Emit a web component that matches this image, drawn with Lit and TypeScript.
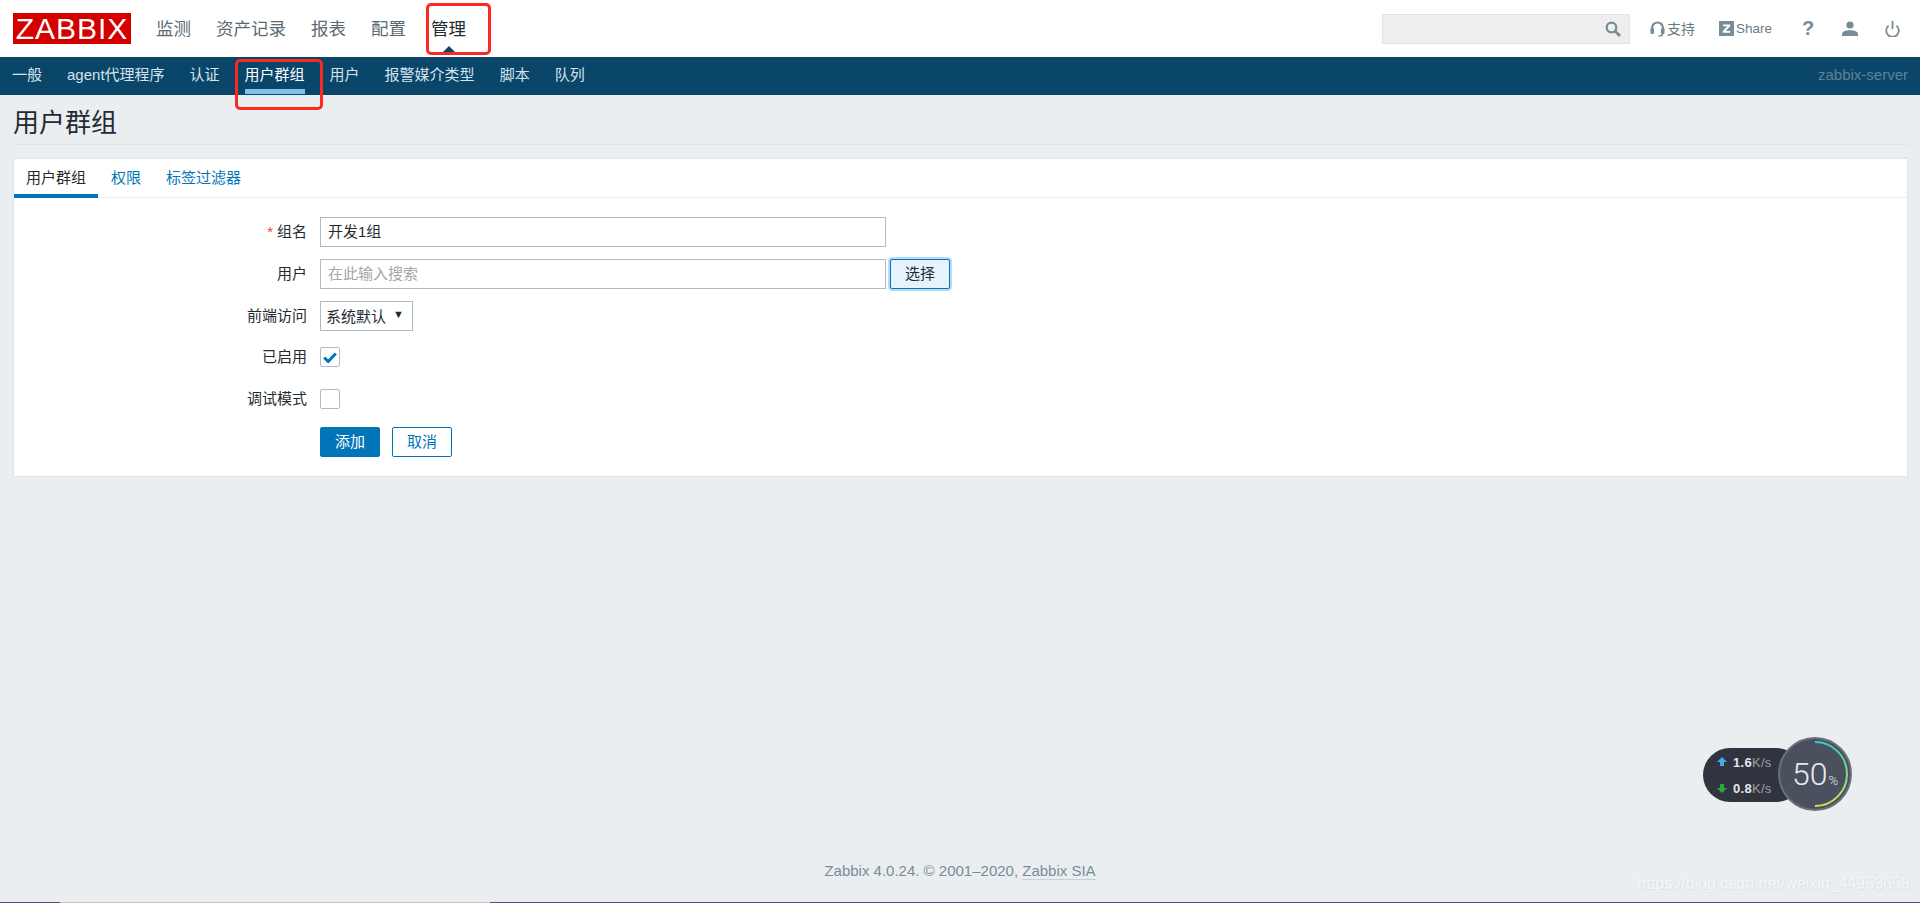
import { LitElement, html, css, svg } from "lit";
import { customElement } from "lit/decorators.js";

@customElement("app-root")
export class AppRoot extends LitElement {
  static styles = css`
    :host {
      display: flex;
      flex-direction: column;
      position: relative;
      height: 903px;
      overflow: hidden;
      background: #ebeef0;
      font-family: "Liberation Sans", "Noto Sans CJK SC", sans-serif;
      color: #1f2c33;
    }
    a { text-decoration: none; color: inherit; }
    .top {
      height: 57px;
      flex: none;
      background: #fff;
      display: flex;
      align-items: center;
      position: relative;
    }
    .logo {
      width: 118px;
      height: 31px;
      margin-left: 13px;
      background: #d40000;
      color: #fff;
      font-size: 30px;
      line-height: 31px;
      text-align: center;
      letter-spacing: 1px;
      flex: none;
    }
    .mainnav { display: flex; gap: 25px; margin: 0 0 2px 25px; font-size: 17.5px; color: #5c6b73; }
    .mainnav .on { color: #1f2c33; position: relative; }
    .mainnav .on::after {
      content: "";
      position: absolute;
      left: 50%;
      margin-left: -9px;
      top: 31px;
      border: 9px solid transparent;
      border-top: 0;
      border-bottom: 9px solid #0a466a;
    }
    .tools { margin-left: auto; display: flex; align-items: center; padding-right: 20px; font-size: 13.5px; color: #6a7a82; }
    .search {
      width: 238px;
      height: 28px;
      background: #eeeeee;
      border: 1px solid #e4e4e4;
      display: flex;
      align-items: center;
      justify-content: flex-end;
      padding-right: 8px;
      box-sizing: content-box;
      margin-right: 20px;
    }
    .tool { display: flex; align-items: center; gap: 2px; }
    .support { width: 45px; margin-right: 24px; }
    .support span { font-size: 14px; margin-bottom: 2px; }
    .share { width: 53px; margin-right: 30px; }
    .help { width: 10px; margin-right: 30px; color: #768d99; font-size: 20px; font-weight: 700; }
    .user { width: 16px; margin-right: 27px; }
    .power { width: 15px; }
    .sub {
      height: 38px;
      flex: none;
      background: #0a466a;
      display: flex;
      align-items: stretch;
      padding: 0 12px;
      font-size: 15px;
      color: #d5e4ec;
    }
    .subnav { display: flex; gap: 25px; }
    .subnav a { display: block; line-height: 36px; height: 32px; }
    .subnav a.on { color: #fff; border-bottom: 5px solid #7fc1ee; }
    .server { margin-left: auto; line-height: 36px; color: #5e8299; }
    main { flex: 1; padding: 0 12px 0 13px; display: flex; flex-direction: column; min-height: 0; }
    h1 {
      margin: 0;
      font-weight: 400;
      font-size: 26px;
      height: 50px;
      line-height: 56px;
      border-bottom: 1px solid #dfe4e7;
      box-sizing: border-box;
    }
    .card {
      margin-top: 13px;
      background: #fff;
      border: 1px solid #dfe4e7;
      height: 319px;
      box-sizing: border-box;
    }
    .tabs { display: flex; gap: 1px; height: 39px; border-bottom: 1px solid #ebeef0; font-size: 15px; color: #0275b8; box-sizing: border-box; }
    .tabs a { display: block; padding: 0 12px; line-height: 37px; height: 39px; box-sizing: border-box; }
    .tabs a.on { color: #1f2c33; border-bottom: 4px solid #0275b8; }
    form {
      display: grid;
      grid-template-columns: 293px 1fr;
      column-gap: 13px;
      grid-auto-rows: 30px;
      row-gap: 12px;
      padding-top: 19px;
      font-size: 15px;
      align-items: center;
    }
    label { text-align: right; color: #1f2c33; margin-bottom: 3px; }
    label.lift { margin-bottom: 6px; }
    label i { color: #e8453c; font-style: normal; margin-right: 4px; }
    .ctl { display: flex; align-items: center; gap: 4px; }
    .inp {
      width: 566px;
      height: 30px;
      box-sizing: border-box;
      border: 1px solid #acbbc4;
      padding-left: 7px;
      line-height: 27px;
      color: #1f2c33;
    }
    .inp.ph { color: #a5a5a5; }
    .pick {
      width: 60px;
      height: 30px;
      box-sizing: border-box;
      border: 1px solid #0275b8;
      border-radius: 2px;
      background: #e6f3fc;
      box-shadow: 0 0 0 2px #b9dcf5;
      text-align: center;
      line-height: 28px;
      color: #1f2c33;
    }
    .sel {
      width: 93px;
      height: 30px;
      box-sizing: border-box;
      border: 1px solid #acbbc4;
      padding-left: 5px;
      line-height: 29px;
      display: flex;
      justify-content: space-between;
    }
    .sel span:last-child { font-size: 11px; margin-right: 8px; line-height: 25px; }
    .chk {
      width: 20px;
      height: 20px;
      margin-top: -2px;
      box-sizing: border-box;
      border: 1px solid #acbbc4;
      border-radius: 2px;
      display: flex;
      align-items: center;
      justify-content: center;
    }
    .btns { display: flex; gap: 12px; grid-column: 2; }
    .btn {
      width: 60px;
      height: 30px;
      box-sizing: border-box;
      border: 1px solid #0275b8;
      border-radius: 2px;
      text-align: center;
      line-height: 28px;
      color: #0275b8;
    }
    .btn.primary { background: #0275b8; color: #fff; }
    footer {
      flex: none;
      height: 40px;
      text-align: center;
      font-size: 15px;
      color: #768d99;
      line-height: 18px;
    }
    footer a { border-bottom: 1px solid #c6d0d6; }
    .strip { flex: none; height: 1px; display: flex; }
    .strip b { background: #5c4a84; }
    .strip b:nth-child(1) { width: 60px; }
    .strip b:nth-child(2) { width: 430px; background: #c4c4c4; }
    .strip b:nth-child(3) { flex: 1; }
    .mark {
      position: absolute;
      border: 3px solid #fa2a1e;
      border-radius: 5px;
      box-sizing: border-box;
      pointer-events: none;
    }
    .m1 { left: 426px; top: 3px; width: 65px; height: 52px; }
    .m2 { left: 235px; top: 59px; width: 88px; height: 51px; }
    .water {
      position: absolute;
      right: 10px;
      bottom: 10px;
      font-size: 16px;
      color: #f4f6f7;
      text-shadow: 1px 1px 1px #dadee1;
    }
    .widget { position: absolute; left: 1703px; top: 737px; width: 150px; height: 76px; }
    .pill {
      position: absolute;
      left: 0;
      top: 11px;
      width: 100px;
      height: 54px;
      border-radius: 27px;
      background: #2f343e;
      font-size: 13px;
      color: #e5e8ee;
    }
    .rate { position: absolute; left: 30px; font-weight: 700; letter-spacing: 0.3px; }
    .rate small { font-size: 13px; font-weight: 400; color: #9aa0aa; }
    .arrow { position: absolute; left: 14px; }
    .dial { position: absolute; left: 75px; top: 0; }
    .pct {
      position: absolute;
      left: 75px;
      top: 0;
      width: 74px;
      height: 74px;
      display: flex;
      align-items: baseline;
      justify-content: center;
      line-height: 74px;
      font-size: 32px;
      font-weight: 300;
      color: #e8eaee;
      font-family: Roboto, sans-serif;
    }
    .pct small { font-size: 13px; margin-left: 1px; }
  `;

  render() {
    const icon = "#768d99";
    return html`
      <div class="top">
        <div class="logo">ZABBIX</div>
        <nav class="mainnav">
          <a>监测</a><a>资产记录</a><a>报表</a><a>配置</a><a class="on">管理</a>
        </nav>
        <div class="tools">
          <div class="search">
            <svg width="16" height="16" viewBox="0 0 16 16" fill="none" stroke="${icon}">
              <circle cx="6.5" cy="6.5" r="4.8" stroke-width="2.2"></circle>
              <path d="M10 10l5 5" stroke-width="2.8"></path>
            </svg>
          </div>
          <div class="tool support">
            <svg width="15" height="16" viewBox="0 0 15 16" fill="none">
              <path d="M2 10V7a5.5 5.5 0 0 1 11 0v3" stroke="${icon}" stroke-width="2.2"></path>
              <rect x="0.5" y="7" width="3.5" height="6" rx="1.2" fill="${icon}"></rect>
              <rect x="11" y="7" width="3.5" height="6" rx="1.2" fill="${icon}"></rect>
              <path d="M12.5 12.5q0 2.5-4 2.5" stroke="${icon}" stroke-width="1.5"></path>
            </svg>
            <span>支持</span>
          </div>
          <div class="tool share">
            <svg width="15" height="15" viewBox="0 0 15 15">
              <rect width="15" height="15" fill="${icon}"></rect>
              <path d="M4 3.5h7.2v1.8L6.8 10h4.4v1.8H3.8V10l4.4-4.7H4z" fill="#fff"></path>
            </svg>
            <span>Share</span>
          </div>
          <div class="tool help">?</div>
          <div class="tool user">
            <svg width="16" height="15" viewBox="0 0 16 15" fill="${icon}">
              <circle cx="8" cy="4" r="3.6"></circle>
              <path d="M0 15v-2.2c0-2 3.5-3.6 8-3.6s8 1.6 8 3.6V15z"></path>
            </svg>
          </div>
          <div class="tool power">
            <svg width="15" height="16" viewBox="0 0 15 16" fill="none" stroke="${icon}" stroke-width="1.8">
              <path d="M3.6 4.6a6.3 6.3 0 1 0 7.8 0"></path>
              <path d="M7.5 0v8"></path>
            </svg>
          </div>
        </div>
      </div>
      <div class="sub">
        <nav class="subnav">
          <a>一般</a><a>agent代理程序</a><a>认证</a><a class="on">用户群组</a><a>用户</a><a>报警媒介类型</a><a>脚本</a><a>队列</a>
        </nav>
        <div class="server">zabbix-server</div>
      </div>
      <main>
        <h1>用户群组</h1>
        <section class="card">
          <div class="tabs">
            <a class="on">用户群组</a><a>权限</a><a>标签过滤器</a>
          </div>
          <form>
            <label><i>*</i>组名</label>
            <div class="ctl"><div class="inp">开发1组</div></div>
            <label>用户</label>
            <div class="ctl"><div class="inp ph">在此输入搜索</div><div class="pick">选择</div></div>
            <label>前端访问</label>
            <div class="ctl"><div class="sel"><span>系统默认</span><span>▼</span></div></div>
            <label class="lift">已启用</label>
            <div class="ctl">
              <div class="chk">
                <svg width="14" height="11" viewBox="0 0 14 11" fill="none" stroke="#0275b8" stroke-width="3">
                  <path d="M1.2 5.5l4 4L12.8 1.5"></path>
                </svg>
              </div>
            </div>
            <label class="lift">调试模式</label>
            <div class="ctl"><div class="chk"></div></div>
            <div class="btns">
              <div class="btn primary">添加</div><div class="btn">取消</div>
            </div>
          </form>
        </section>
        <div style="flex:1"></div>
      </main>
      <footer>Zabbix 4.0.24. © 2001–2020, <a>Zabbix SIA</a></footer>
      <div class="strip"><b></b><b></b><b></b></div>
      <div class="mark m1"></div>
      <div class="mark m2"></div>
      <div class="water">https://blog.csdn.net/weixin_44953658</div>
      <div class="widget">
        <div class="pill">
          <svg class="arrow" style="top:9px" width="10" height="10" viewBox="0 0 10 10" fill="#4aa8e8"><path d="M5 0l5 5H7v4H3V5H0z"></path></svg>
          <span class="rate" style="top:7px">1.6<small>K/s</small></span>
          <svg class="arrow" style="top:35px" width="10" height="10" viewBox="0 0 10 10" fill="#25b03a"><path d="M5 10L0 5h3V1h4v4h3z"></path></svg>
          <span class="rate" style="top:33px">0.8<small>K/s</small></span>
        </div>
        ${svg`<svg class="dial" width="74" height="74" viewBox="0 0 74 74" fill="none">
          <defs>
            <linearGradient id="g" x1="0" y1="0" x2="0" y2="1">
              <stop offset="0" stop-color="#2fd0c0"></stop>
              <stop offset="1" stop-color="#d8e050"></stop>
            </linearGradient>
          </defs>
          <circle cx="37" cy="37" r="36" fill="#4a505e" stroke="#6b707a" stroke-width="2"></circle>
          <path d="M37 5a32 32 0 0 1 0 64" stroke="url(#g)" stroke-width="2"></path>
        </svg>`}
        <div class="pct">50<small>%</small></div>
      </div>
    `;
  }
}
